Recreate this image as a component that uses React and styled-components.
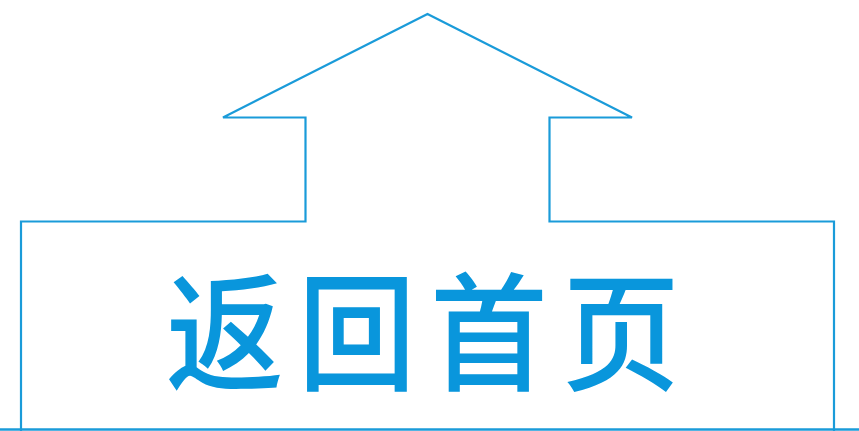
import React from "react";
import styled, { createGlobalStyle } from "styled-components";

const Global = createGlobalStyle`
  html, body { margin: 0; padding: 0; background: #ffffff; }
  body { font-family: "Noto Sans CJK SC", "Noto Sans", sans-serif; }
`;

const Stage = styled.div`
  width: 859px;
  height: 431px;
  display: grid;
  background: #ffffff;
  overflow: hidden;
`;

const Outline = styled.svg`
  grid-area: 1 / 1;
  width: 859px;
  height: 431px;
  display: block;
`;

const Label = styled.div`
  grid-area: 1 / 1;
  align-self: start;
  justify-self: start;
  margin: ${(p) => p.$top}px 0 0 ${(p) => p.$left}px;
  font-family: "Noto Sans CJK SC", sans-serif;
  font-size: 128px;
  font-weight: 500;
  line-height: 1;
  letter-spacing: 15.5px;
  color: #0996dc;
  white-space: nowrap;
  transform: scaleX(0.92);
  transform-origin: 0 0;
`;

export default function App() {
  return (
    <>
      <Global />
      <Stage>
        <Outline viewBox="0 0 859 431" xmlns="http://www.w3.org/2000/svg">
          <path
            d="M21 431 V221.5 H305.5 V117.5 H223 L427.5 14 L632 117.5 H549.5 V221.5 H834 V431"
            fill="none"
            stroke="#1a9bd9"
            strokeWidth="2.2"
            strokeLinejoin="miter"
          />
          <line x1="0" y1="429.5" x2="859" y2="429.5" stroke="#1a9bd9" strokeWidth="2.6" />
        </Outline>
        <Label $top={262} $left={166}>返回首页</Label>
      </Stage>
    </>
  );
}
